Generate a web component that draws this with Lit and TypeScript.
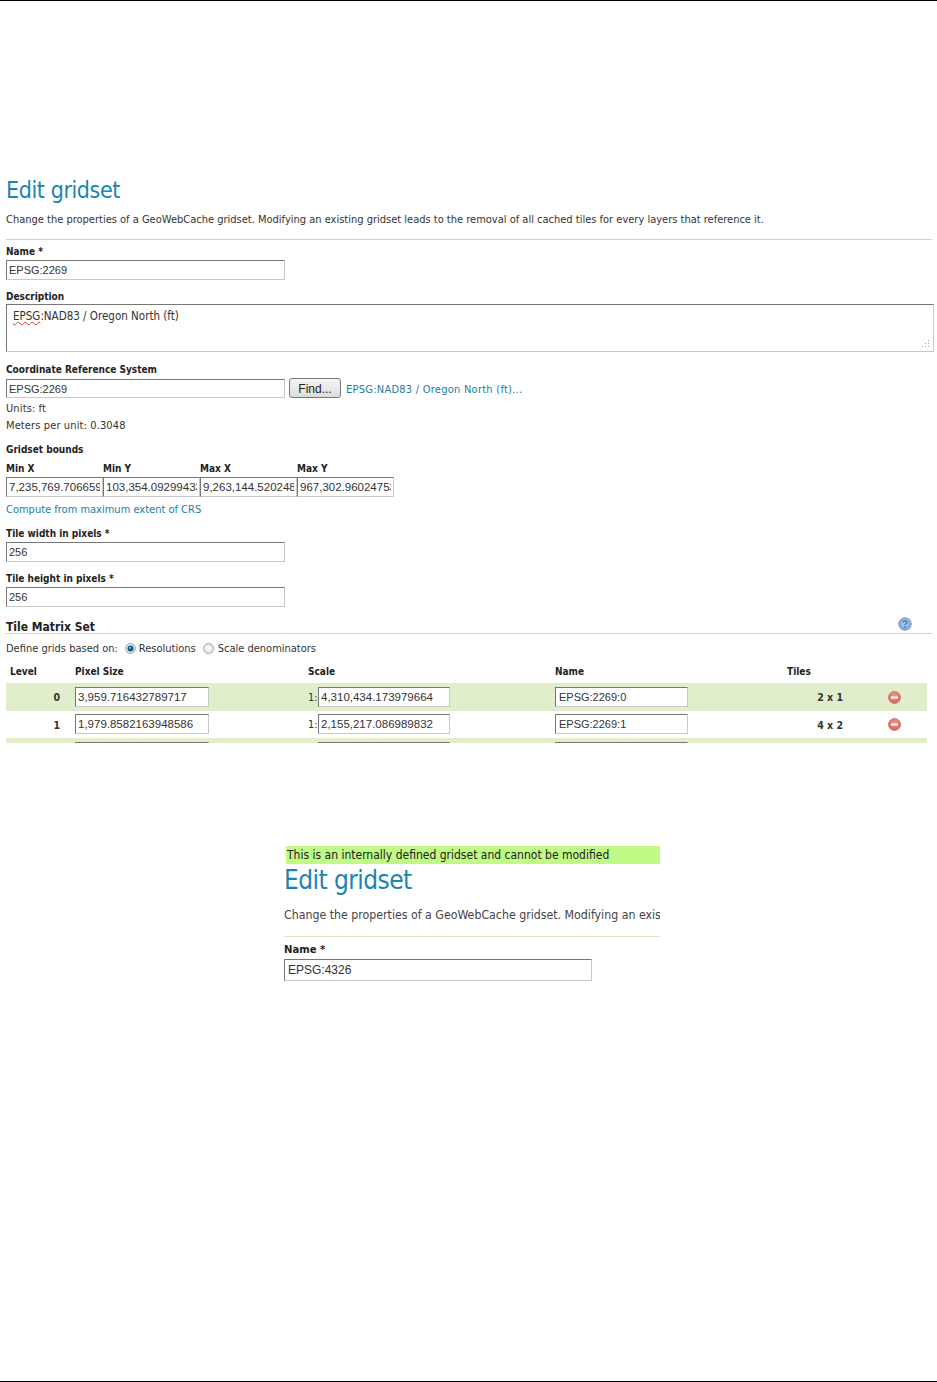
import { LitElement, html, css, svg } from "lit";
import { customElement } from "lit/decorators.js";

const RemoveIcon = html`<svg class="ico" width="13" height="13" viewBox="0 0 13 13">
  <defs><radialGradient id="rg" cx="50%" cy="35%" r="65%"><stop offset="0" stop-color="#f0958b"/><stop offset="1" stop-color="#df5f55"/></radialGradient></defs>
  <circle cx="6.5" cy="6.5" r="6" fill="url(#rg)" stroke="#cf8077" stroke-width="1"/>
  <rect x="3" y="5.4" width="7" height="2.2" fill="#fff"/>
</svg>`;

const HelpIcon = html`<svg width="14" height="14" viewBox="0 0 14 14">
  <defs><radialGradient id="hg" cx="50%" cy="45%" r="60%"><stop offset="0" stop-color="#c5d6ee"/><stop offset="1" stop-color="#6f97cf"/></radialGradient></defs>
  <circle cx="7" cy="7" r="6.2" fill="url(#hg)" stroke="#7c9ccd" stroke-width="1"/>
  <path d="M5.2 5.4C5.2 3.4 8.8 3.4 8.8 5.4C8.8 6.7 7 6.7 7 8" fill="none" stroke="#4a76b4" stroke-width="1.5"/>
  <rect x="6.2" y="9" width="1.6" height="1.6" fill="#4a76b4"/>
</svg>`;

const radio = (on: boolean) => html`<svg class="radio ${on ? "" : "off"}" width="11" height="11" viewBox="0 0 11 11">
  <circle cx="5.5" cy="5.5" r="5" fill="#e6e6e6" stroke="#a8a8a8"/>
  ${on ? svg`<circle cx="5.5" cy="5.5" r="3" fill="#0f5f8e"/><circle cx="5" cy="4.8" r="1" fill="#8cc3e4"/>` : svg`<circle cx="5.5" cy="5.5" r="3" fill="#f6f6f6"/>`}
</svg>`;

const rows = [
  { level: "0", px: "3,959.716432789717", scale: "4,310,434.173979664", name: "EPSG:2269:0", tiles: "2 x 1" },
  { level: "1", px: "1,979.8582163948586", scale: "2,155,217.086989832", name: "EPSG:2269:1", tiles: "4 x 2" },
  { level: "", px: "", scale: "", name: "", tiles: "" },
];

@customElement("app-root")
export class AppRoot extends LitElement {
  static styles = css`
    :host {
      display: block;
      height: 1382px;
      box-sizing: border-box;
      border-top: 1px solid #000;
      border-bottom: 1px solid #000;
      background: #fff;
      color: #333;
      overflow: hidden;
      font-family: "DejaVu Sans Condensed", "DejaVu Sans", sans-serif;
      font-size: 11px;
    }
    * { box-sizing: border-box; }
    .top { padding: 175px 0 0 6px; width: 934px; }
    h1 {
      margin: 0; font-weight: 400; color: #1a85b5;
      font-size: 23px; letter-spacing: -0.4px; line-height: 28px; height: 28px;
    }
    .intro { margin: 0; height: 16px; line-height: 16px; white-space: nowrap; }
    .intro-wrap { padding-top: 8px; height: 36px; border-bottom: 1px solid #cbdcaa; width: 926px; }
    .lbl { font-weight: 700; font-size: 10px; height: 13px; line-height: 13px; color: #222; white-space: nowrap; margin-bottom: 2px; }
    input {
      display: block; margin: 0; padding: 0 2px;
      font: 11px "Liberation Sans", Arial, sans-serif; color: #333;
      border: 1px solid; border-color: #777 #c8c8c8 #c8c8c8 #777;
      background: #fff; height: 20px; outline: none;
    }
    .num { font-size: 11.5px; }
    .pad3 { padding: 0 3px; }
    .w279 { width: 279px; }
    .m5 { margin-top: 5px; }
    .m9 { margin-top: 9px; }
    .m10 { margin-top: 10px; }
    .m11 { margin-top: 11px; }
    .desc {
      position: relative; width: 928px; height: 48px; margin-top: -1px;
      border: 1px solid; border-color: #777 #c8c8c8 #c8c8c8 #777;
      padding: 4px 6px; font-size: 11.5px; line-height: 14px;
    }
    .sq { text-decoration: underline wavy #d33 1px; text-underline-offset: 1px; }
    .grip { position: absolute; right: 3px; bottom: 3px; display: block; }
    .crs { display: flex; align-items: flex-end; margin-top: 1px; height: 20px; }
    .crs input { height: 19px; }
    button {
      margin: 0 0 0 4px; width: 52px; height: 20px; padding: 1px 0 0;
      font: 12px "Liberation Sans", Arial, sans-serif; color: #222;
      border: 1px solid #777; border-radius: 3px;
      background: linear-gradient(#f6f6f6, #dcdcdc);
    }
    a { color: #1a7ea8; text-decoration: none; }
    .crs a { margin-left: 5px; letter-spacing: 0.25px; align-self: center; padding-top: 2px; }
    .line { height: 17px; line-height: 17px; }
    .lines { margin-top: 2px; margin-bottom: 9px; letter-spacing: 0.12px; }
    .bounds { display: grid; grid-template-columns: repeat(4, 97px); width: 388px; margin-top: 5px; }
    .bounds .lbl { height: 14px; line-height: 14px; margin-bottom: 2px; padding-top: 1px; }
    .bounds input { width: 97px; }
    .compute { margin-top: 4px; }
    .h2 {
      display: flex; justify-content: space-between; align-items: flex-end;
      width: 926px; height: 20px; margin-top: 7px; border-bottom: 1px solid #cbdcaa;
      font-weight: 700; font-size: 12px; line-height: 12px; color: #222;
    }
    .h2 svg { margin: 0 20px 2px 0; }
    .radios { display: flex; align-items: center; height: 29px; white-space: nowrap; }
    .radio { margin: 0 3px 0 7px; }
    .radio.off { margin-right: 4px; }
    .clip { height: 80px; overflow: hidden; width: 921px; }
    table { border-collapse: collapse; table-layout: fixed; width: 921px; }
    th { text-align: left; font-weight: 700; font-size: 10px; color: #222; height: 20px; padding: 0 0 4px; }
    td { padding: 0; height: 28px; font-size: 10.5px; }
    tr.even td { height: 27px; }
    tr.even input { margin-bottom: 1px; }
    tr.odd td { background: #e1eecb; }
    .lvl { text-align: right; padding-right: 15px; font-weight: 700; }
    th.first { padding-left: 4px; }
    .cellscale { display: flex; align-items: center; }
    .cellscale span { width: 10px; font-size: 11px; }
    .tiles { text-align: right; font-weight: 700; }
    td.del { padding-left: 45px; }
    .ico { display: block; }
    .w134 { width: 134px; }
    .w132 { width: 132px; }
    .w133 { width: 133px; }
    .second { margin: 103px 0 0 284px; width: 376px; overflow: hidden; color: #444; }
    .notice {
      margin-left: 2px; height: 18px; line-height: 18px; padding-left: 1px;
      background: #c0fb86; color: #222; font-size: 12px; white-space: nowrap;
    }
    .second h1 { font-size: 26px; letter-spacing: -0.55px; height: 32px; line-height: 32px; }
    .second .intro { font-size: 12.25px; height: 18px; line-height: 18px; }
    .second .intro-wrap { width: 100%; height: 41px; padding-top: 10px; border-bottom-color: #d8e8bf; }
    .second .lbl { font-size: 11.2px; margin-top: 5px; height: 15px; line-height: 15px; }
    .second input { width: 308px; height: 22px; padding: 0 3px; font-size: 12px; }
  `;

  render() {
    return html`
      <div class="top">
        <h1>Edit gridset</h1>
        <div class="intro-wrap">
          <p class="intro">Change the properties of a GeoWebCache gridset. Modifying an existing gridset leads to the removal of all cached tiles for every layers that reference it.</p>
        </div>
        <div class="lbl m5">Name *</div>
        <input class="w279" value="EPSG:2269" />
        <div class="lbl m10">Description</div>
        <div class="desc">
          <span class="sq">EPSG</span>:NAD83 / Oregon North (ft)
          <svg class="grip" width="9" height="9" viewBox="0 0 9 9" fill="#aaa">
            <rect x="7" y="1" width="1" height="1"/><rect x="4" y="4" width="1" height="1"/><rect x="7" y="4" width="1" height="1"/>
            <rect x="1" y="7" width="1" height="1"/><rect x="4" y="7" width="1" height="1"/><rect x="7" y="7" width="1" height="1"/>
          </svg>
        </div>
        <div class="lbl m11">Coordinate Reference System</div>
        <div class="crs">
          <input class="w279" value="EPSG:2269" />
          <button>Find...</button>
          <a href="#">EPSG:NAD83 / Oregon North (ft)...</a>
        </div>
        <div class="lines">
          <div class="line">Units: ft</div>
          <div class="line">Meters per unit: 0.3048</div>
        </div>
        <div class="lbl">Gridset bounds</div>
        <div class="bounds">
          <div class="lbl">Min X</div><div class="lbl">Min Y</div><div class="lbl">Max X</div><div class="lbl">Max Y</div>
          <input class="num" value="7,235,769.706659" /><input class="num" value="103,354.09299433" /><input class="num" value="9,263,144.520248" /><input class="num" value="967,302.96024753" />
        </div>
        <div class="line compute"><a href="#">Compute from maximum extent of CRS</a></div>
        <div class="lbl m9">Tile width in pixels *</div>
        <input class="w279" value="256" />
        <div class="lbl m10">Tile height in pixels *</div>
        <input class="w279" value="256" />
        <div class="h2"><span>Tile Matrix Set</span>${HelpIcon}</div>
        <div class="radios">Define grids based on: ${radio(true)}Resolutions ${radio(false)}Scale denominators</div>
        <div class="clip">
          <table>
            <colgroup><col style="width:69px"/><col style="width:233px"/><col style="width:247px"/><col style="width:232px"/><col style="width:56px"/><col/></colgroup>
            <thead><tr><th class="first">Level</th><th>Pixel Size</th><th>Scale</th><th>Name</th><th>Tiles</th><th></th></tr></thead>
            <tbody>
              ${rows.map((r, i) => html`<tr class=${i % 2 === 0 ? "odd" : "even"}>
                <td class="lvl">${r.level}</td>
                <td><input class="w134 num" value=${r.px} /></td>
                <td><div class="cellscale"><span>${r.level ? "1:" : ""}</span><input class="w132 num" value=${r.scale} /></div></td>
                <td><input class="w133 pad3" value=${r.name} /></td>
                <td class="tiles">${r.tiles}</td>
                <td class="del">${i < 2 ? RemoveIcon : ""}</td>
              </tr>`)}
            </tbody>
          </table>
        </div>
      </div>
      <div class="second">
        <div class="notice">This is an internally defined gridset and cannot be modified</div>
        <h1>Edit gridset</h1>
        <div class="intro-wrap">
          <p class="intro">Change the properties of a GeoWebCache gridset. Modifying an existing gridset leads to the removal of all cached tiles for every layers that reference it.</p>
        </div>
        <div class="lbl">Name *</div>
        <input value="EPSG:4326" />
      </div>
    `;
  }
}
